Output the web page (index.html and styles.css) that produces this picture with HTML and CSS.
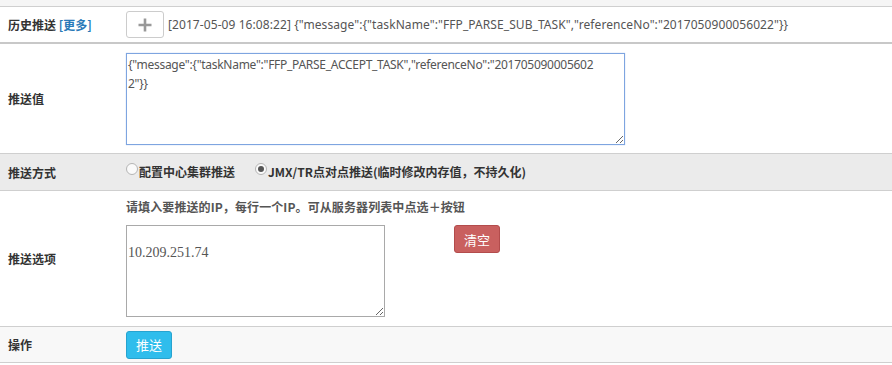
FILE: index.html
```html
<!DOCTYPE html>
<html lang="zh-CN">
<head>
<meta charset="utf-8">
<title>推送</title>
<link rel="stylesheet" href="styles.css">
</head>
<body>
<div class="top-strip"></div>
<table class="form-table">
  <tr class="row row-history">
    <th class="label">历史推送 <a class="more" href="#">[更多]</a></th>
    <td class="value">
      <div class="history">
        <button class="btn-plus" type="button" aria-label="添加">
          <svg width="16" height="16" viewBox="0 0 16 16"><path d="M8 1.5V14.5M1.5 8H14.5" stroke="#999" stroke-width="2.6" fill="none"/></svg>
        </button>
        <span class="history-text">[2017-05-09 16:08:22] {"message":{"taskName":"FFP_PARSE_SUB_TASK","referenceNo":"2017050900056022"}}</span>
      </div>
    </td>
  </tr>
  <tr class="row row-value">
    <th class="label">推送值</th>
    <td class="value">
      <textarea class="ta ta-value">{"message":{"taskName":"FFP_PARSE_ACCEPT_TASK","referenceNo":"201705090005602
2"}}</textarea>
    </td>
  </tr>
  <tr class="row row-mode">
    <th class="label">推送方式</th>
    <td class="value">
      <div class="radios">
        <label class="radio"><span class="dot"></span>配置中心集群推送</label>
        <label class="radio"><span class="dot on"></span>JMX/TR点对点推送(临时修改内存值，不持久化)</label>
      </div>
    </td>
  </tr>
  <tr class="row row-options">
    <th class="label">推送选项</th>
    <td class="value">
      <div class="hint">请填入要推送的IP，每行一个IP。可从服务器列表中点选＋按钮</div>
      <div class="ip-line">
        <textarea class="ta ta-ip">10.209.251.74</textarea>
        <button class="btn btn-danger" type="button">清空</button>
      </div>
    </td>
  </tr>
  <tr class="row row-action">
    <th class="label">操作</th>
    <td class="value">
      <button class="btn btn-info" type="button">推送</button>
    </td>
  </tr>
</table>
</body>
</html>
```

FILE: styles.css
```css
html, body {
  margin: 0;
  padding: 0;
  background: #fff;
}
body {
  font-family: "Noto Sans", "Noto Sans CJK SC", sans-serif;
  font-size: 12px;
  color: #333;
}
.top-strip {
  height: 6px;
  background: #f5f5f5;
  border-bottom: 1px solid #cfcfcf;
}
.form-table {
  width: 100%;
  border-collapse: collapse;
}
.row > th, .row > td {
  padding: 0;
  border-bottom: 1px solid #cfcfcf;
  vertical-align: middle;
}
.label {
  width: 126px;
  box-sizing: border-box;
  padding-left: 8px !important;
  text-align: left;
  font-family: "Noto Sans CJK SC", sans-serif;
  font-weight: 700;
  font-size: 12px;
  color: #333;
}
.more {
  color: #2a7ab8;
  text-decoration: none;
}
.row-history > th, .row-history > td {
  height: 35px;
  border-bottom: 2px solid #c8c8c8;
}
.history {
  display: flex;
  align-items: center;
  gap: 4px;
}
.btn-plus {
  width: 38px;
  height: 27px;
  border: 1px solid #ccc;
  border-radius: 3px;
  background: #fff;
  display: flex;
  align-items: center;
  justify-content: center;
  padding: 0;
}
.history-text {
  color: #555;
  font-size: 12px;
  font-family: "Noto Sans", sans-serif;
  letter-spacing: 0.08px;
}
.row-value > th, .row-value > td {
  height: 109px;
}
.ta {
  display: block;
  box-sizing: border-box;
  margin: 0;
  resize: both;
  color: #555;
}
.ta-value {
  width: 499px;
  height: 92px;
  border: 1px solid #7ea5e0;
  box-shadow: 0 0 1px #a9c4ee;
  outline: none;
  padding: 1px 1px;
  font-family: "Noto Sans", sans-serif;
  font-size: 12px;
  line-height: 19px;
  letter-spacing: -0.28px;
}
.row-mode > th, .row-mode > td {
  height: 36px;
  background: #ebebeb;
}
.radios {
  display: flex;
  align-items: center;
  gap: 20px;
}
.radio {
  display: flex;
  align-items: center;
  font-family: "Noto Sans CJK SC", sans-serif;
  font-weight: 700;
  font-size: 12px;
  color: #333;
  margin-top: -2px;
}
.dot {
  width: 10px;
  height: 10px;
  border: 1px solid #b5b5b5;
  border-radius: 50%;
  background: #fafafa;
  margin-right: 1px;
  margin-top: -4px;
  position: relative;
}
.dot.on::after {
  content: "";
  position: absolute;
  left: 2px;
  top: 2px;
  width: 6px;
  height: 6px;
  border-radius: 50%;
  background: #555;
}
.row-options > th, .row-options > td {
  height: 135px;
}
.row-options > td {
  vertical-align: top;
}
.hint {
  margin-top: 6px;
  height: 20px;
  line-height: 20px;
  font-family: "Noto Sans CJK SC", sans-serif;
  font-weight: 700;
  color: #555;
  letter-spacing: 0.1px;
}
.ip-line {
  display: flex;
  align-items: flex-start;
  gap: 69px;
  margin-top: 8px;
}
.ta-ip {
  width: 259px;
  height: 92px;
  border: 1px solid #a9a9a9;
  padding: 17px 1px 1px;
  font-family: "Liberation Serif", serif;
  font-size: 14px;
  line-height: 20px;
  outline: none;
}
.btn {
  width: 46px;
  height: 28px;
  border-radius: 3px;
  color: #fff;
  font-family: "Noto Sans CJK SC", sans-serif;
  font-size: 13px;
  padding: 0;
}
.btn-danger {
  background: #c9605f;
  border: 1px solid #b34c4c;
}
.btn-info {
  background: #2fbdec;
  border: 1px solid #27a3cf;
}
.row-action > th, .row-action > td {
  height: 35px;
  background: #f8f8f8;
}
```
